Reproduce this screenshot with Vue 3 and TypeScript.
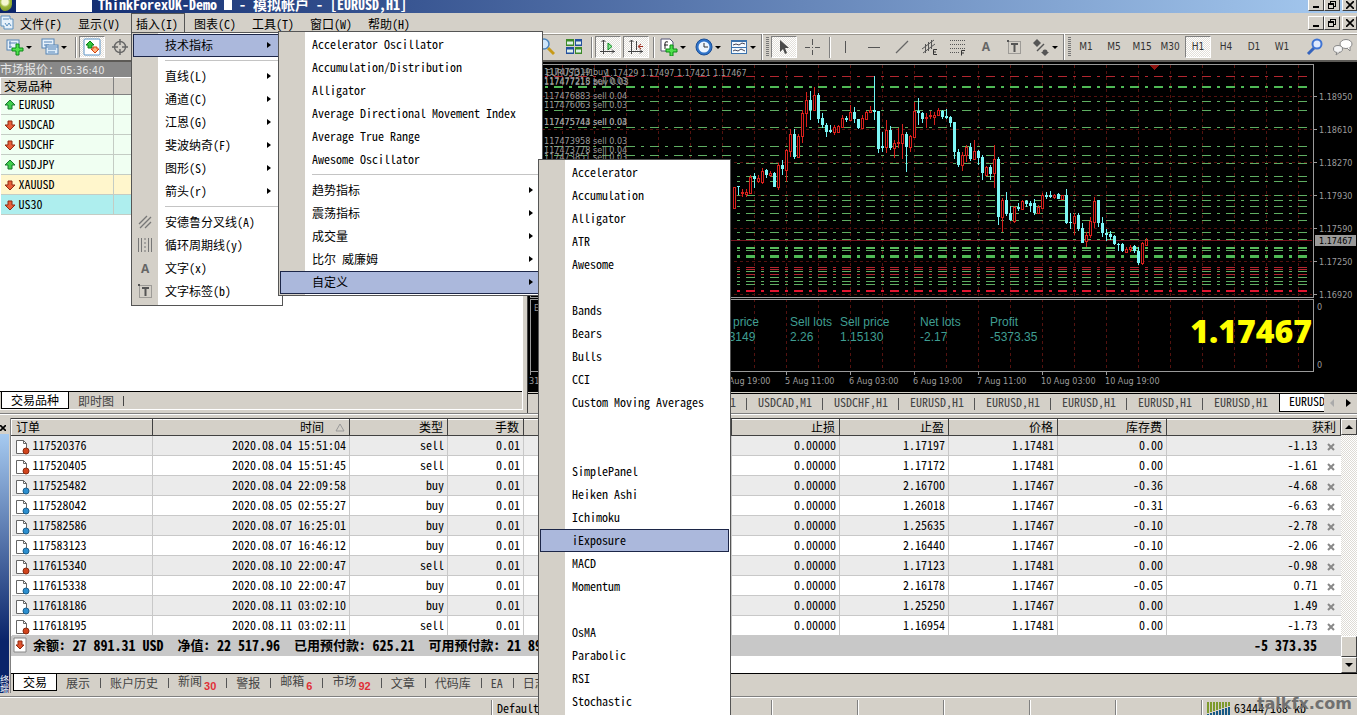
<script setup lang="ts">
type Candle = [string, number, number, number, number]

const icons: Record<string, string> = {
  newchart: '<rect x="1" y="2" width="12" height="10" fill="#e8f2fb" stroke="#5583b5"/><path d="M3 5h8M4 3v7M3 9h3" stroke="#5583b5" fill="none"/><path d="M10 6h3v4h4v3h-4v4h-3v-4H6v-3h4z" fill="#4fe04c" stroke="#0a8a16"/>',
  profiles: '<rect x="1" y="1" width="12" height="9" fill="#e8f2fb" stroke="#5583b5"/><path d="M3 4h8M3 7h5" stroke="#5583b5"/><rect x="5" y="7" width="12" height="9" fill="#dcebf8" stroke="#5583b5"/><path d="M7 11h8M7 14h7M5 9h12" stroke="#5583b5" fill="none"/>',
  watch: '<rect x="1" y="1" width="16" height="16" rx="1" fill="#fff" stroke="#5a94c8"/><path d="M7 3l4 4H9v3H5V7H3z" fill="#36c63c" stroke="#0b7f18"/><path d="M12 15l-4-4h2V9h4v2h2z" fill="#ffb27a" stroke="#d2410d"/>',
  target: '<g fill="none" stroke="#666" stroke-width="1.4"><circle cx="9" cy="9" r="5.5"/><path d="M9 1v6M9 11v6M1 9h6M11 9h6"/></g>',
  zoom: '<path d="M11 10l6 6" stroke="#c79a18" stroke-width="3"/><circle cx="7" cy="6" r="5" fill="#cfe6fa" stroke="#4a84bd" stroke-width="1.5"/>',
  tile: '<rect x="1" y="1" width="8" height="7" fill="#3c8a28"/><rect x="10" y="1" width="7" height="7" fill="#23509e"/><rect x="1" y="9" width="8" height="7" fill="#23509e"/><rect x="10" y="9" width="7" height="7" fill="#3c8a28"/><path d="M2 5h6M11 5h5M2 13h6M11 13h5" stroke="#dff0e8" stroke-width="3"/>',
  scroll: '<path d="M4.500 2v14M1 13.500h15M2.500 4l2-2 2 2M13 11.500l2 2-2 2" fill="none" stroke="#444"/><path d="M9 5l4 3.500L9 12z" fill="#8fe894" stroke="#078a1b"/>',
  shift: '<path d="M4.500 2v14M1 13.500h15M2.500 4l2-2 2 2M13 11.500l2 2-2 2M9.500 3v9" fill="none" stroke="#444"/><path d="M16 8.500h-4M14 6l-3 2.500 3 2.500" fill="none" stroke="#a0281c"/>',
  template: '<path d="M1 1h9l3 3v9H1z" fill="#fff" stroke="#557"/><path d="M5 11V5q0-2 3-1M4 7h4" fill="none" stroke="#222"/><path d="M10 7h3v4h4v3h-4v4h-3v-4H6v-3h4z" fill="#4fe04c" stroke="#0a8a16"/>',
  clock: '<circle cx="9" cy="9" r="8" fill="#2f73c9" stroke="#1a4e96"/><circle cx="9" cy="9" r="5.500" fill="#eef6ff"/><path d="M9 5v4h4" fill="none" stroke="#333"/>',
  period: '<rect x="1.500" y="2.500" width="15" height="13" fill="#f4faff" stroke="#3a72ad"/><path d="M1 3h16" stroke="#3a72ad" stroke-width="2"/><path d="M1 9.500h16" stroke="#3a72ad"/><path d="M3 7l3-1 3 1 3-2 3 1M3 13l2-1 3 1 3-2 4 2" fill="none" stroke="#445"/>',
  cursor: '<path d="M5 2v12l3-3 2 5 2-1-2-5h4z" fill="#4a4a4a"/>',
  cross: '<path d="M9.500 1v6M9.500 12v5M2 9.500h5M12 9.500h5" stroke="#555"/><path d="M9 9.500h1" stroke="#555"/>',
  vline: '<path d="M8.500 3v12" stroke="#555"/>',
  hline: '<path d="M3 9.500h12" stroke="#555"/>',
  diag: '<path d="M3 15L15 3" stroke="#666" stroke-width="1.300"/>',
  channel: '<path d="M1 11L13 2M2 15l12-9M4.500 6v9M7.500 4v9M10.500 2v9" fill="none" stroke="#555"/><path d="M16 11.500h-3.500v5H16M12 14h3" fill="none" stroke="#333"/>',
  fibo: '<path d="M1 2.500h15M1 6.500h15M1 10.500h15M1 14.500h9" stroke="#555" stroke-dasharray="1 1"/><path d="M16 12.500h-3.500v5M12 15h3" fill="none" stroke="#333"/>',
  tbox: '<rect x="3.500" y="3.500" width="12" height="12" fill="none" stroke="#666" stroke-dasharray="1 1"/><path d="M6 6h7M9.500 6v8" stroke="#555" stroke-width="2"/><rect x="2" y="2" width="2" height="2" fill="#555"/>',
  shapes: '<path d="M5 1l4 4-4 4-4-4zM9 14h8l-4 4z" fill="#555"/><path d="M5 13l7-7" stroke="#555" stroke-width="1.500"/><circle cx="13" cy="14" r="2.500" fill="#555"/>',
  search: '<path d="M8 10l-6 6" stroke="#3564bd" stroke-width="3"/><circle cx="11" cy="6" r="4.500" fill="#dfeaff" stroke="#3f74d4" stroke-width="2"/>',
  chat: '<ellipse cx="13" cy="6" rx="6" ry="4.500" fill="#fff" stroke="#888"/><path d="M14 10l3 3v-4" fill="#fff" stroke="#888"/><ellipse cx="5" cy="11" rx="4.500" ry="3.500" fill="#f4f4f4" stroke="#888"/><path d="M4 14l-1 3 4-3" fill="#f4f4f4" stroke="#888"/>',
  pitchfork: '<path d="M3 11l8-8M4 15L15 4M9 15l6-6" stroke="#777" stroke-width="1.300"/>',
  cycles: '<path d="M2.500 2v14M5.500 2v14M12.500 2v14M15.500 2v14" stroke="#777"/><path d="M9 2v14" stroke="#777" stroke-dasharray="2 2"/>',
}

const menus = ['文件(F)', '显示(V)', '插入(I)', '图表(C)', '工具(T)', '窗口(W)', '帮助(H)']
const frames = ['M1', 'M5', 'M15', 'M30', 'H1', 'H4', 'D1', 'W1']
const lineTools = ['vline', 'hline', 'diag', 'channel', 'fibo', 'A', 'tbox']

const symbols = [
  { n: 'EURUSD', up: true, c: '' }, { n: 'USDCAD', up: false, c: '' }, { n: 'USDCHF', up: false, c: '' },
  { n: 'USDJPY', up: true, c: '' }, { n: 'XAUUSD', up: false, c: 'gold' }, { n: 'US30', up: false, c: 'aqua' },
]

const insertMenu = [
  { t: '技术指标', sub: true, on: true }, { sep: true },
  { t: '直线(L)', sub: true }, { t: '通道(C)', sub: true }, { t: '江恩(G)', sub: true },
  { t: '斐波纳奇(F)', sub: true }, { t: '图形(S)', sub: true }, { t: '箭头(r)', sub: true }, { sep: true },
  { t: '安德鲁分叉线(A)', icon: 'pitchfork' }, { t: '循环周期线(y)', icon: 'cycles' },
  { t: '文字(x)', icon: 'A' }, { t: '文字标签(b)', icon: 'tbox' },
] as { t?: string; sub?: boolean; on?: boolean; sep?: boolean; icon?: string }[]

const indicatorMenu = [
  { t: 'Accelerator Oscillator' }, { t: 'Accumulation/Distribution' }, { t: 'Alligator' },
  { t: 'Average Directional Movement Index' }, { t: 'Average True Range' }, { t: 'Awesome Oscillator' }, { sep: true },
  { t: '趋势指标', sub: true }, { t: '震荡指标', sub: true }, { t: '成交量', sub: true },
  { t: '比尔 威廉姆', sub: true }, { t: '自定义', sub: true, on: true },
] as { t?: string; sub?: boolean; on?: boolean; sep?: boolean }[]

const customMenu = ['Accelerator', 'Accumulation', 'Alligator', 'ATR', 'Awesome', '', 'Bands', 'Bears', 'Bulls', 'CCI',
  'Custom Moving Averages', '', '', 'SimplePanel', 'Heiken Ashi', 'Ichimoku', 'iExposure', 'MACD', 'Momentum', '',
  'OsMA', 'Parabolic', 'RSI', 'Stochastic']

const chartTabs = ['EURUSD,H1', 'USDCAD,M1', 'USDCHF,H1', 'EURUSD,H1', 'EURUSD,H1', 'EURUSD,H1', 'EURUSD,H1', 'EURUSD,H1']

const orders = [
  ['117520376', '2020.08.04 15:51:04', 'sell', '1.17197', '1.17481', '0.00', '-1.13'],
  ['117520405', '2020.08.04 15:51:45', 'sell', '1.17172', '1.17481', '0.00', '-1.61'],
  ['117525482', '2020.08.04 22:09:58', 'buy', '2.16700', '1.17467', '-0.36', '-4.68'],
  ['117528042', '2020.08.05 02:55:27', 'buy', '1.26018', '1.17467', '-0.31', '-6.63'],
  ['117582586', '2020.08.07 16:25:01', 'buy', '1.25635', '1.17467', '-0.10', '-2.78'],
  ['117583123', '2020.08.07 16:46:12', 'buy', '2.16440', '1.17467', '-0.10', '-2.06'],
  ['117615340', '2020.08.10 22:00:47', 'sell', '1.17123', '1.17481', '0.00', '-0.98'],
  ['117615338', '2020.08.10 22:00:47', 'buy', '2.16178', '1.17467', '-0.05', '0.71'],
  ['117618186', '2020.08.11 03:02:10', 'buy', '1.25250', '1.17467', '0.00', '1.49'],
  ['117618195', '2020.08.11 03:02:11', 'sell', '1.16954', '1.17481', '0.00', '-1.73'],
]
const totals = [['余额:', '27 891.31 USD'], ['净值:', '22 517.96'], ['已用预付款:', '625.21'], ['可用预付款:', '21 892.75']]
const terminalTabs = [
  { t: '展示' }, { t: '账户历史' }, { t: '新闻', n: '30' }, { t: '警报' }, { t: '邮箱', n: '6' },
  { t: '市场', n: '92' }, { t: '文章' }, { t: '代码库' }, { t: 'EA' }, { t: '日志' },
] as { t: string; n?: string }[]

const G = '#5fae62', R = '#b3262f'
const levels: [number, string, number][] = [
  [76, R, 1], [86, '#4fb955', 2], [101, G, 1], [110, G, 1], [127, G, 1], [146, G, 1], [155, G, 1], [163, G, 1],
  [176, G, 1], [181, G, 1], [195, G, 1], [200, G, 1], [206, G, 1], [213, G, 1], [220, G, 1], [232, G, 1], [239, G, 1],
  [247, '#58b95c', 2], [250, G, 1], [255, '#4fb955', 3], [267, R, 1], [269, R, 1], [271, G, 1], [274, R, 1],
  [277, G, 1], [281, G, 1], [284, G, 1], [290, '#e0142f', 2],
]
const gridX = Array.from({ length: 24 }, (_, i) => 562 + i * 32)
const prices: [number, string][] = [[96, '1.18950'], [129, '1.18610'], [162, '1.18270'], [195, '1.17930'], [228, '1.17590'], [261, '1.17250'], [294, '1.16920']]
const dates: [number, string][] = [[530, '31 Jul 03:00'], [722, '4 Aug 19:00'], [786, '5 Aug 11:00'], [850, '6 Aug 03:00'], [914, '6 Aug 19:00'], [978, '7 Aug 11:00'], [1042, '10 Aug 03:00'], [1106, '10 Aug 19:00']]
const tickets: [number, string][] = [[75, '117477319 buy'], [84, '117477218 sell 0.03'], [85, '117477215 buy 0.03'], [99, '117476883 sell 0.04'], [108, '117476063 sell 0.03'], [125, '117475744 sell 0.04'], [125, '117475743 sell 0.03'], [144, '117473958 sell 0.03'], [153, '117473778 sell 0.04'], [160, '117473851 sell 0.03']]
const exposure: [number, string, string][] = [[709, 'Buy price', '1.33149'], [790, 'Sell lots', '2.26'], [840, 'Sell price', '1.15130'], [920, 'Net lots', '-2.17'], [990, 'Profit', '-5373.35']]

// colour, high, body top, body bottom, low — in thirds of a pixel below the plot's top
const raw = 'r380,380,443,443 c378,378,382,405 r388,396,400,410 r388,396,402,410 r345,350,398,402 c340,348,358,385 r345,355,362,370 r325,332,365,372 c328,330,346,354 r334,340,345,350 c335,340,380,382 r310,316,380,390 c300,316,328,345 r268,270,330,365 r207,222,272,290 c208,222,290,296 r222,228,290,292 r150,160,228,250 r95,120,160,200 c93,120,150,180 r82,104,150,152 c98,105,178,190 c158,174,196,205 c190,196,215,230 c195,210,215,218 r195,200,216,226 r196,198,217,218 r165,175,202,204 c168,174,179,186 r136,156,180,184 c142,156,178,188 c176,178,204,206 r165,175,203,206 r152,156,176,178 r138,150,157,160 c48,150,155,180 c153,154,266,278 c216,258,265,275 r180,210,262,280 c198,210,264,270 r240,250,265,295 r205,245,250,265 r193,222,248,296 c216,222,262,335 r225,228,262,275 r125,154,230,232 c114,154,158,195 c155,158,176,190 r160,170,174,204 r152,164,168,178 r155,166,170,195 r145,150,164,166 c150,152,170,176 c148,168,173,178 c168,170,188,200 c186,187,275,296 c268,275,315,320 r275,286,315,332 r256,262,286,305 c248,260,298,302 r240,272,296,298 c270,272,294,315 c285,292,340,360 r318,320,344,346 c315,322,342,360 r256,298,338,384 c290,296,470,494 r415,420,470,516 c396,420,462,468 c438,460,480,484 r438,440,482,488 c430,440,446,452 r420,422,446,446 c420,422,432,440 c422,430,438,455 c418,430,460,466 r435,440,458,460 r400,406,443,444 c396,404,410,418 c394,406,410,415 r403,404,412,418 c400,402,416,416 r404,406,416,420 c388,405,488,492 c460,486,490,506 r460,468,488,526 c460,466,508,512 c488,504,548,550 r515,524,544,560 r472,484,526,534 r412,424,486,504 c420,421,488,500 c470,488,518,532 c508,518,526,542 c512,522,530,540 c526,528,552,554 c550,552,556,574 c550,552,572,576 r562,568,576,580 r556,562,566,576 c556,558,574,578 c562,572,608,616 r545,550,608,614 r534,540,554,558'
const candles: Candle[] = raw.split(' ').map((s) => {
  const v = s.slice(1).split(',').map((n) => Math.round(Number(n) / 3) + 60)
  return [s[0], v[0], v[1], v[2], v[3]]
})
</script>

<template>
  <div class="app">
    <header class="title">
      <i class="ball"></i><i class="blank"></i>
      <b>ThinkForexUK-Demo <i class="block"></i> - 模拟帐户 - [EURUSD,H1]</b>
      <div class="wins"><button aria-label="minimize"><i class="min"></i></button><button aria-label="restore"><i class="rest"></i></button><button class="x" aria-label="close"><svg width="8" height="8" viewBox="0 0 8 8"><path d="M0 0l8 8M8 0L0 8" stroke="#000" stroke-width="1.6" /></svg></button></div>
    </header>

    <nav class="menubar">
      <svg width="14" height="16" viewBox="0 0 14 16"><path d="M1 1h9v3h3v10H4v-3H1z" fill="#e6f1fa" stroke="#5a8fbe" /><path d="M3 4h6M5 8l2 3 2-3 2 3" fill="none" stroke="#5a8fbe" /></svg>
      <button v-for="m in menus" :key="m" :class="{ open: m === '插入(I)' }">{{ m }}</button>
      <div class="wins"><button aria-label="minimize chart"><i class="min"></i></button><button aria-label="restore chart"><i class="rest"></i></button><button class="x" aria-label="close chart"><svg width="8" height="8" viewBox="0 0 8 8"><path d="M0 0l8 8M8 0L0 8" stroke="#000" stroke-width="1.6" /></svg></button></div>
    </nav>

    <div class="toolbar">
      <div class="group">
        <button v-for="i in ['newchart', 'profiles']" :key="i" class="tool wide" :aria-label="i"><svg width="18" height="18" v-html="icons[i]"></svg><i class="caret"></i></button>
        <i class="sep"></i>
        <button class="tool" aria-label="market watch"><span class="face on"><svg width="18" height="18" v-html="icons.watch"></svg></span></button>
        <button class="tool" aria-label="data window"><svg width="18" height="18" v-html="icons.target"></svg></button>
      </div>
      <div class="group right">
        <button v-for="i in ['zoom', 'tile']" :key="i" class="tool" :aria-label="i"><svg width="18" height="18" v-html="icons[i]"></svg></button>
        <i class="sep"></i>
        <button v-for="i in ['scroll', 'shift']" :key="i" class="tool" :aria-label="i"><span class="face on"><svg width="18" height="18" v-html="icons[i]"></svg></span></button>
        <i class="sep"></i>
        <button v-for="i in ['template', 'clock', 'period']" :key="i" class="tool wide" :aria-label="i"><svg width="18" height="18" v-html="icons[i]"></svg><i class="caret"></i></button>
        <i class="grip"></i>
        <button class="tool" aria-label="cursor"><span class="face on"><svg width="18" height="18" v-html="icons.cursor"></svg></span></button>
        <button class="tool" aria-label="crosshair"><svg width="18" height="18" v-html="icons.cross"></svg></button>
        <i class="sep"></i>
        <button v-for="i in lineTools" :key="i" class="tool" :aria-label="i"><b v-if="i === 'A'" class="letter">A</b><svg v-else width="18" height="18" v-html="icons[i]"></svg></button>
        <button class="tool wide" aria-label="shapes"><svg width="18" height="18" v-html="icons.shapes"></svg><i class="caret"></i></button>
        <i class="grip"></i>
        <button v-for="f in frames" :key="f" class="tool tf"><span class="face" :class="{ on: f === 'H1' }">{{ f }}</span></button>
        <i class="gap"></i>
        <button class="tool" aria-label="search"><svg width="18" height="18" v-html="icons.search"></svg></button>
        <button class="tool" aria-label="chat"><svg width="20" height="18" v-html="icons.chat"></svg></button>
      </div>
    </div>

    <div class="main">
      <section class="watch">
        <h2>市场报价: <span>05:36:40</span></h2>
        <table>
          <thead><tr><th>交易品种</th><th></th></tr></thead>
          <tbody>
            <tr v-for="s in symbols" :key="s.n" :class="s.c">
              <td><svg width="12" height="12" viewBox="0 0 12 12"><path v-if="s.up" d="M6 1l5 5H8v4H4V6H1z" fill="#3fce4c" stroke="#14762a" /><path v-else d="M6 11L1 6h3V2h4v4h3z" fill="#e8603a" stroke="#8f2a12" /></svg>{{ s.n }}</td><td></td>
            </tr>
          </tbody>
        </table>
        <div class="watchtabs"><button class="cur">交易品种</button><button>即时图</button><i></i></div>
      </section>

      <section class="chart">
        <svg class="plot" viewBox="528 62 829 330" preserveAspectRatio="xMaxYMin meet">
          <g shape-rendering="crispEdges">
            <rect x="528" y="62" width="829" height="330" fill="#000" />
            <g stroke="#54120f" stroke-dasharray="3 3">
              <path v-for="x in gridX" :key="x" :d="`M${x}.500 65V371`" />
              <path v-for="p in prices" :key="p[0]" :d="`M530 ${p[0]}.500H1312`" />
            </g>
            <path d="M530 240.500H1312" stroke="#7c1420" />
            <path v-for="(l, i) in levels" :key="i" :d="`M530 ${l[0] + l[2] / 2}H1307`" :stroke="l[1]" :stroke-width="l[2]" stroke-dasharray="9 6 3 6" />
            <g v-for="(c, i) in candles" :key="i">
              <rect :x="734 + i * 4" :y="c[1]" width="1" :height="Math.max(1, c[4] - c[1])" :fill="c[0] === 'r' ? '#d8201c' : '#6ff5f5'" />
              <rect v-if="c[0] === 'c'" :x="733 + i * 4" :y="c[2]" width="3" :height="Math.max(1, c[3] - c[2])" fill="#7df6f6" />
              <rect v-else :x="733 + i * 4 + 0.5" :y="c[2] + 0.5" width="2" :height="Math.max(1, c[3] - c[2])" fill="#000" stroke="#d8201c" />
            </g>
            <g fill="none" stroke="#9a9a9a">
              <path d="M530 64.500H1313.500V297.500H530zM530 299.500H1313.500V371.500H530z" />
              <path v-for="p in prices" :key="p[0]" :d="`M1314 ${p[0]}.500h3`" />
              <path v-for="d in dates" :key="d[0]" :d="`M${d[0]}.500 372v3`" />
            </g>
            <path d="M1150 65h9l-4.500 5z" fill="#8f1410" />
          </g>
          <g class="small">
            <text v-for="(t, i) in tickets" :key="i" x="544" :y="t[0]">{{ t[1] }}</text>
            <text x="546" y="76">EURUSD,H1</text><text x="605" y="76">1.17429 1.17497 1.17421 1.17467</text>
            <text v-for="p in prices" :key="p[0]" x="1319" :y="p[0] + 4">{{ p[1] }}</text>
            <text v-for="d in dates" :key="d[0]" :x="d[0] - 1" y="384">{{ d[1] }}</text>
            <text x="1317" y="310">0</text><text x="1317" y="368">0</text><text x="534" y="311">E</text>
            <rect x="1315" y="235" width="41" height="11" fill="#999" /><text x="1319" y="244" class="now">1.17467</text>
          </g>
          <g class="expo"><template v-for="e in exposure" :key="e[0]"><text :x="e[0]" y="326">{{ e[1] }}</text><text :x="e[0] + (e[0] === 709 ? 3 : 0)" y="341">{{ e[2] }}</text></template></g>
          <text class="big" x="1312" y="343" text-anchor="end">1.17467</text>
        </svg>
        <div class="charttabs">
          <button v-for="(t, i) in chartTabs" :key="i">{{ t }}</button>
          <button class="cur">EURUSD,H1</button>
          <span class="nav"><i class="l"></i><i class="r"></i></span>
        </div>
      </section>
    </div>

    <section class="terminal">
      <div class="side"><button aria-label="close terminal"><svg width="6" height="6" viewBox="0 0 6 6"><path d="M0 0l6 6M6 0L0 6" stroke="#000" stroke-width="1.6" /></svg></button><div>终端</div></div>
      <div class="body">
        <div class="gridwrap">
          <div class="grid">
            <table>
              <colgroup><col class="w141" /><col class="w197" /><col class="w98" /><col class="w76" /><col /><col class="w108" /><col class="w109" /><col class="w109" /><col class="w109" /><col class="w174" /></colgroup>
              <thead><tr><th class="left">订单</th><th>时间<svg width="10" height="9" viewBox="0 0 10 9"><path d="M5 1l4 7H1z" fill="none" stroke="#999" /></svg></th><th>类型</th><th>手数</th><th></th><th>止损</th><th>止盈</th><th>价格</th><th>库存费</th><th>获利</th></tr></thead>
              <tbody>
                <tr v-for="o in orders" :key="o[0]">
                  <td class="left"><svg width="16" height="16" viewBox="0 0 16 16"><path d="M2.500 1.500h7l3 3v10h-10z" fill="#fff" stroke="#666" /><path d="M9.500 1.500v3h3" fill="none" stroke="#666" /><circle cx="12" cy="12" r="3" :fill="o[2] === 'sell' ? '#d2441c' : '#2b8fd0'" :stroke="o[2] === 'sell' ? '#8c2a0e' : '#17608f'" /></svg>{{ o[0] }}</td>
                  <td>{{ o[1] }}</td><td>{{ o[2] }}</td><td>0.01</td><td></td><td>0.00000</td><td>{{ o[3] }}</td><td>{{ o[4] }}</td><td>{{ o[5] }}</td>
                  <td>{{ o[6] }}<button class="del" aria-label="close order"><svg width="8" height="8" viewBox="0 0 8 8"><path d="M1 1l6 6M7 1L1 7" stroke="#888" stroke-width="2" /></svg></button></td>
                </tr>
              </tbody>
            </table>
            <div class="sum">
              <svg width="14" height="16" viewBox="0 0 14 16"><path d="M1 1h12v14H1z" fill="#fff" stroke="#888" /><path d="M7 12L3 8h2V4h4v4h2z" fill="#e0522c" stroke="#8f2a12" /></svg>
              <span v-for="t in totals" :key="t[0]" class="tot"><b class="lab">{{ t[0] }}</b><b>{{ t[1] }}</b></span>
              <b class="profit">-5 373.35</b>
            </div>
          </div>
          <div class="scroll"><button aria-label="scroll up"><i class="up"></i></button><div class="track"></div><button class="thumb" aria-label="scroll position"></button><button aria-label="scroll down"><i class="down"></i></button></div>
        </div>
        <div class="termtabs">
          <button class="cur">交易</button>
          <button v-for="t in terminalTabs" :key="t.t">{{ t.t }}<sub v-if="t.n">{{ t.n }}</sub></button>
        </div>
      </div>
    </section>

    <footer class="status">
      <span class="grow"></span><span class="prof">Default</span><span></span><span></span><span></span><span></span><span></span>
      <span class="net"><svg width="24" height="15" viewBox="0 0 24 15"><g v-for="i in 8" :key="i"><rect :x="i * 3 - 3" y="1" width="2" :height="12 - i" fill="#7d9a2c" /><rect :x="i * 3 - 3" :y="14 - i" width="2" :height="i + 1" fill="#175a86" /></g></svg>63444/168 kb<em>talkfx.com</em></span>
    </footer>

    <div class="menu insert">
      <template v-for="(m, i) in insertMenu" :key="i">
        <hr v-if="m.sep" />
        <button v-else :class="{ on: m.on }"><span class="ic"><b v-if="m.icon === 'A'" class="letter">A</b><svg v-else-if="m.icon" width="18" height="18" v-html="icons[m.icon]"></svg></span>{{ m.t }}<i v-if="m.sub" class="arrow"></i></button>
      </template>
    </div>
    <div class="menu indicators">
      <template v-for="(m, i) in indicatorMenu" :key="i">
        <hr v-if="m.sep" />
        <button v-else :class="{ on: m.on }"><span class="ic"></span>{{ m.t }}<i v-if="m.sub" class="arrow"></i></button>
      </template>
    </div>
    <div class="menu custom">
      <template v-for="(m, i) in customMenu" :key="i"><button v-if="m" :class="{ on: m === 'iExposure' }"><span class="ic"></span>{{ m }}</button><div v-else class="empty"></div></template>
    </div>
  </div>
</template>

<style>
html, body { height: 100%; overflow: hidden; }
#app { height: 100%; }
</style>

<style scoped>
* { box-sizing: border-box; }
.app { position: relative; height: 100%; overflow: hidden; display: flex; flex-direction: column; background: #d4d0c8; color: #000; font: 12px/16px "Noto Sans CJK SC", "Liberation Mono", monospace; font-feature-settings: "hwid"; }
button { font: inherit; font-feature-settings: inherit; color: inherit; border: 0; background: none; padding: 0; margin: 0; white-space: nowrap; }
i, em { font-style: normal; }
svg { display: block; flex: none; }
table { border-collapse: collapse; table-layout: fixed; width: 100%; }

.title { height: 13px; flex: none; display: flex; align-items: flex-start; background: linear-gradient(90deg, #0a246a, #a6caf0); color: #fff; }
.title b { font-size: 14px; line-height: 8px; white-space: pre; }
.ball { width: 12px; height: 11px; border-radius: 0 0 8px 6px; background: radial-gradient(circle at 5px 2px, #f4f7d0 0 3px, #9db83a 5px, #6c8a1c); margin-right: 4px; }
.blank { width: 76px; height: 12px; background: #fff; margin-right: 6px; }
.block { display: inline-block; width: 8px; height: 10px; background: #fff; vertical-align: top; }
.wins { margin-left: auto; display: flex; }
.wins button { width: 16px; height: 14px; background: #d4d0c8; border: 1px solid; border-color: #fff #404040 #404040 #fff; display: grid; place-items: center; overflow: hidden; }
.wins .x { margin-left: 2px; width: 15px; }
.title .wins button { height: 11px; border-top: 0; }
.min { width: 6px; height: 2px; background: #000; align-self: end; margin-bottom: 2px; }
.rest { width: 6px; height: 6px; border: 1px solid #000; border-top-width: 2px; box-shadow: 2px -2px 0 -1px #d4d0c8, 2px -2px #000; margin: 2px 2px 0 0; background: #d4d0c8; }

.menubar { height: 20px; flex: none; display: flex; align-items: center; }
.menubar > button { width: 58px; height: 20px; line-height: 19px; padding-left: 6px; text-align: left; }
.menubar > button.open { border: 1px solid #555; border-bottom: 0; width: 54px; line-height: 17px; margin: 0 3px 0 1px; padding-left: 4px; }

.toolbar { height: 29px; flex: none; display: flex; border-top: 1px solid #fff; border-bottom: 2px solid #5c5a56; box-shadow: inset 0 1px #9a968e; }
.group { display: flex; align-items: center; padding-left: 2px; }
.group.right { margin-left: auto; padding: 0; }
.tool { width: 28px; height: 26px; display: grid; place-items: center; flex: none; }
.tool.wide { width: 35px; display: flex; align-items: center; padding-left: 4px; gap: 2px; }
.face { width: 26px; height: 22px; display: grid; place-items: center; border: 1px solid transparent; }
.face.on { border-color: #808080 #fff #fff #808080; background: repeating-conic-gradient(#fff 0 25%, #e2dfd9 0 50%) 0 0/2px 2px; }
.sep { width: 6px; height: 21px; background: linear-gradient(90deg, transparent 3px, #808080 3px 4px, #fff 4px 5px, transparent 5px); }
.grip { width: 9px; height: 26px; background: linear-gradient(90deg, #808080 1px, #fff 1px 2px, transparent 2px), repeating-linear-gradient(#777 0 1px, transparent 1px 2px) 5px 3px/3px 20px no-repeat; }
.gap { width: 5px; }
.caret { border: 3px solid transparent; border-top: 3px solid #000; border-bottom: 0; }
.letter { font: bold 12px/16px "Open Sans", sans-serif; color: #666; }
.tf { font: 10px/14px "DejaVu Sans Condensed", "DejaVu Sans", sans-serif; color: #333; }

.main { height: 351px; flex: none; display: flex; }
.watch { flex: 0 1 523px; min-width: 0; display: flex; flex-direction: column; background: #fff; border-right: 1px solid #fff; margin-bottom: 3px; }
.watch h2 { margin: 0; height: 15px; flex: none; background: #888; color: #e6e6e6; font-size: 12px; line-height: 14px; font-weight: normal; }
.watch h2 span { font: 11px/14px "DejaVu Sans Condensed", sans-serif; }
.watch th { background: #d4d0c8; height: 17px; border: 1px solid; border-color: #fff #808080 #808080 #fff; font-weight: normal; text-align: left; vertical-align: top; padding: 0 0 0 3px; line-height: 15px; }
.watch th:first-child { width: 113px; }
.watch td { height: 20px; padding: 0 3px; background: #f0fff2; border-bottom: 1px solid #c4ccc4; border-right: 1px solid #c4ccc4; line-height: 17px; vertical-align: top; }
.watch td svg { display: inline-block; vertical-align: -2px; margin-right: 3px; }
.watch .gold td { background: #fff6cc; }
.watch .aqua td { background: #aeeeee; }
.watchtabs { margin-top: auto; height: 19px; flex: none; display: flex; background: #d4d0c8; border-top: 1px solid #000; border-bottom: 1px solid #fff; padding-left: 1px; color: #444; }
.watchtabs button { padding: 0 9px; line-height: 14px; }
.watchtabs i { width: 1px; height: 10px; margin-top: 4px; background: #444; }
.cur { background: #fff; color: #000; border: 1px solid #000; border-top: 0; }
.chart { flex: 1 1 0; min-width: 0; margin-left: 5px; display: flex; flex-direction: column; box-shadow: -1px 0 #404040; }
.plot { width: 100%; height: 330px; background: #000; }
.small { font: 9px "DejaVu Sans Condensed", "DejaVu Sans", sans-serif; font-feature-settings: normal; fill: #9c9c9c; }
.now { fill: #000; }
.expo { font: 12px "Liberation Sans", Arial, sans-serif; font-feature-settings: normal; fill: #3f9e92; }
.big { font: 800 32px "Open Sans", sans-serif; font-feature-settings: normal; fill: #ff0; }
.charttabs { height: 19px; display: flex; justify-content: flex-end; border-top: 1px solid #000; color: #444; margin-top: 1px; overflow: hidden; }
.charttabs button { width: 76px; flex: none; height: 18px; line-height: 14px; padding-bottom: 3px; background: linear-gradient(#555, #555) right 4px/1px 12px no-repeat; }
.charttabs button:nth-child(8) { background: none; }
.charttabs .cur { width: 45px; overflow: hidden; text-align: left; padding-left: 9px; background: #fff; border-right: 0; }
.nav { width: 33px; display: flex; align-items: center; justify-content: space-between; padding: 0 6px; }
.nav i { border: 4px solid transparent; }
.nav .l { border-right-color: #aaa; border-left: 0; }
.nav .r { border-left: 5px solid #000; border-right: 0; }

.terminal { flex: none; display: flex; border-top: 1px solid #808080; box-shadow: inset 0 1px #fff; padding-top: 4px; height: 280px; }
.side { width: 10px; display: flex; flex-direction: column; flex: none; }
.side button { height: 16px; padding-top: 3px; }
.side div { flex: 1; width: 9px; background: linear-gradient(#a6caf0, #0a246a 80%); color: #fff; font-size: 9px; line-height: 9px; writing-mode: vertical-rl; text-align: right; overflow: hidden; }
.body { flex: 1; min-width: 0; display: flex; flex-direction: column; border-left: 1px solid #808080; }
.gridwrap { flex: 1; display: flex; background: #fff; border-top: 1px solid #404040; }
.grid { flex: 1; min-width: 0; }
.w76 { width: 76px; } .w98 { width: 98px; } .w108 { width: 108px; } .w109 { width: 109px; } .w141 { width: 141px; } .w174 { width: 174px; } .w197 { width: 197px; }
.grid th { height: 16px; background: #d4d0c8; border: 1px solid; border-color: #fff #404040 #404040 #fff; font-weight: normal; text-align: right; vertical-align: top; padding: 0 4px; line-height: 14px; }
.grid td { height: 20px; padding: 0 3px; text-align: right; vertical-align: top; line-height: 18px; border-right: 1px solid #c8c8c8; border-bottom: 1px solid #c8c8c8; white-space: nowrap; }
.grid tr:nth-child(odd) td { background: #ebebeb; }
.grid .left { text-align: left; padding-left: 2px; }
.grid th.left { padding-left: 4px; }
.grid td svg { display: inline-block; vertical-align: middle; }
.grid td.left svg { margin-right: 3px; }
.grid th svg { display: inline-block; margin-left: 11px; }
.del { width: 20px; text-align: right; padding-right: 3px; }
.grid td:last-child { border-right: 0; }
.sum { height: 20px; display: flex; align-items: center; background: #c8c8c8; font-size: 14px; line-height: 16px; padding: 0 24px 2px 2px; gap: 14px; }
.sum svg { margin-right: -8px; }
.tot { white-space: nowrap; display: flex; gap: 7px; }
.lab { font-size: 13px; }
.profit { margin-left: auto; }
.scroll { width: 16px; flex: none; display: flex; flex-direction: column; background: #d4d0c8; }
.scroll button { height: 16px; background: #d4d0c8; border: 1px solid; border-color: #fff #404040 #404040 #fff; display: grid; place-items: center; }
.scroll .thumb { height: 21px; }
.track { flex: 1; background: repeating-conic-gradient(#fff 0 25%, #dedbd5 0 50%) 0 0/2px 2px; }
.up { border: 4px solid transparent; border-bottom-color: #000; border-top: 0; }
.down { border: 4px solid transparent; border-top-color: #000; border-bottom: 0; }
.termtabs { height: 20px; flex: none; display: flex; border-top: 1px solid #000; padding-left: 2px; color: #444; }
.termtabs button { padding: 0 11px 0 9px; height: 17px; line-height: 14px; background: linear-gradient(#555, #555) right 4px/1px 10px no-repeat; }
.termtabs .cur { background: #fff; padding: 0 9px; color: #000; }
.termtabs sub { font: bold 11px/10px "Liberation Sans", sans-serif; color: #e03038; margin-left: 2px; vertical-align: -4px; }

.status { flex: 1; display: flex; border-top: 1px solid #808080; box-shadow: inset 0 1px #fff; margin-top: 3px; padding-top: 3px; }
.status span { width: 86px; flex: none; border-left: 1px solid #808080; box-shadow: inset 1px 0 #fff; padding-left: 5px; line-height: 16px; white-space: nowrap; }
.status .grow { flex: 1; border: 0; box-shadow: none; }
.status .prof { width: 280px; }
.status .net { width: 156px; position: relative; display: flex; gap: 3px; align-items: center; }
.net em { position: absolute; right: 5px; top: -5px; font: bold 16px/18px "DejaVu Sans", sans-serif; color: #707070; }

.menu { position: absolute; background: linear-gradient(90deg, #d4d0c8 26px, #fff 26px); border: 1px solid #555; padding: 1px; display: flex; flex-direction: column; }
.menu button { height: 23px; line-height: 19px; padding-bottom: 2px; text-align: left; border: 1px solid transparent; display: flex; align-items: center; }
.menu .on { background: #abb8dc; border-color: #1c2648; }
.menu .empty { height: 23px; }
.menu hr { width: auto; margin: 3px 0 4px 32px; border: 0; border-top: 1px solid #c4c4c4; align-self: stretch; }
.ic { width: 31px; flex: none; padding-left: 2px; }
.ic .letter { margin-left: 5px; }
.arrow { margin-left: auto; margin-right: 7px; border: 3px solid transparent; border-left: 4px solid #000; border-right: 0; }
.insert { left: 131px; top: 32px; width: 152px; padding-bottom: 2px; }
.insert .arrow { margin-right: 9px; }
.indicators { left: 278px; top: 31px; width: 265px; }
.custom { left: 538px; top: 159px; width: 193px; bottom: -2px; }
</style>
